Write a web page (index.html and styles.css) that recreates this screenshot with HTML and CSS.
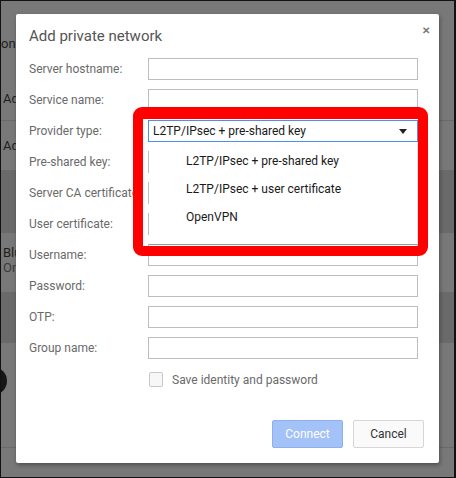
FILE: index.html
```html
<!DOCTYPE html>
<html lang="en">
<head>
    <meta charset="UTF-8">
    <meta name="viewport" content="width=device-width, initial-scale=1.0">
    <title>Add private network</title>
    <link rel="stylesheet" href="styles.css">
</head>
<body>
<div class="screen">

    <!-- settings page behind the dimmed overlay, only the edges show -->
    <div class="backdrop">
        <div class="bg-row bg-top">
            <span class="bg-text bg-cut">onn</span>
            <span class="bg-text">Ad</span>
        </div>
        <div class="bg-row bg-add"><span class="bg-text">Ad</span></div>
        <div class="bg-row bg-dark"></div>
        <div class="bg-row bg-bt">
            <span class="bg-text">Blu</span>
            <span class="bg-text bg-sub">On</span>
        </div>
        <div class="bg-row bg-dark bg-dark2"></div>
        <div class="bg-row bg-device"><span class="bg-avatar"></span></div>
        <div class="bg-row bg-last"></div>
    </div>

    <div class="dialog">
        <div class="dialog-head">
            <h1>Add private network</h1>
            <span class="close">&#x2715;</span>
        </div>

        <div class="form">
            <label>Server hostname:</label>
            <div class="field"></div>

            <label>Service name:</label>
            <div class="field"></div>

            <label>Provider type:</label>
            <div class="select-wrap">
                <div class="select">
                    <span>L2TP/IPsec + pre-shared key</span>
                    <span class="arrow"></span>
                </div>
                <ul class="menu">
                    <li>L2TP/IPsec + pre-shared key</li>
                    <li>L2TP/IPsec + user certificate</li>
                    <li>OpenVPN</li>
                </ul>
            </div>

            <label>Pre-shared key:</label>
            <div class="field"></div>

            <label>Server CA certificate:</label>
            <div class="field"></div>

            <label>User certificate:</label>
            <div class="field"></div>

            <label>Username:</label>
            <div class="field"></div>

            <label>Password:</label>
            <div class="field"></div>

            <label>OTP:</label>
            <div class="field"></div>

            <label>Group name:</label>
            <div class="field"></div>
        </div>

        <div class="save-row">
            <span class="checkbox"></span>
            <span>Save identity and password</span>
        </div>

        <div class="buttons">
            <button class="btn btn-primary">Connect</button>
            <button class="btn">Cancel</button>
        </div>
    </div>

    <!-- red highlight drawn over the screenshot -->
    <div class="highlight"></div>
</div>
</body>
</html>
```

FILE: styles.css
```css
/* page */
body, html {
    margin: 0;
    background: #000;
}
.screen {
    position: relative;
    width: 456px;
    height: 478px;
    box-sizing: border-box;
    border: 1px solid #111;
    border-right-width: 2px;
    overflow: hidden;
    font-family: Roboto, "Liberation Sans", sans-serif;
    background: #787878;
}

/* background page */
.backdrop {
    display: flex;
    flex-direction: column;
}
.bg-row {
    position: relative;
    border-bottom: 1px solid #6a6a6a;
    box-sizing: border-box;
}
.bg-text {
    display: block;
    font-size: 13px;
    line-height: 15px;
    color: #1e1e1e;
    padding-left: 2px;
}
.bg-top {
    height: 120px;
    padding-top: 35px;
}
.bg-top .bg-cut {
    padding-left: 0;
    margin-bottom: 40px;
}
.bg-add {
    height: 50px;
    padding-top: 17px;
}
.bg-dark {
    height: 62px;
    background: #6a6a6a;
}
.bg-bt {
    height: 60px;
    padding-top: 12px;
}
.bg-sub {
    color: #3a3a3a;
}
.bg-dark2 {
    height: 50px;
}
.bg-device {
    height: 105px;
}
.bg-avatar {
    position: absolute;
    left: -22px;
    top: 24px;
    width: 28px;
    height: 28px;
    border-radius: 50%;
    background: #161616;
}
.bg-last {
    height: 40px;
    border-bottom: none;
}

/* dialog */
.dialog {
    position: absolute;
    left: 15px;
    top: 13px;
    width: 423px;
    height: 449px;
    box-sizing: border-box;
    padding: 0 21px 15px 13px;
    background: #fff;
    border-radius: 2px;
    box-shadow: 1px 2px 4px rgba(0, 0, 0, 0.35);
    display: flex;
    flex-direction: column;
}
.dialog-head {
    display: flex;
    justify-content: space-between;
    align-items: flex-start;
    padding-top: 12px;
}
.dialog-head h1 {
    margin: 0;
    font-size: 15px;
    line-height: 20px;
    font-weight: normal;
    color: #555;
}
.close {
    font-size: 10px;
    font-weight: bold;
    color: #777;
    margin-right: -12px;
    margin-top: -1px;
}

/* form rows */
.form {
    display: grid;
    grid-template-columns: 119px 270px;
    grid-auto-rows: 22px;
    row-gap: 9px;
    margin-top: 12px;
}
.form label {
    font-size: 12px;
    line-height: 22px;
    color: #6a6a6a;
    white-space: nowrap;
}
.field {
    position: relative;
    z-index: 1;
    border: 1px solid #bdbdbd;
    background: #fff;
}
.select-wrap {
    position: relative;
    z-index: 3;
}
.select {
    height: 22px;
    box-sizing: border-box;
    border: 1px solid #4c8ef5;
    padding: 0 10px 0 4px;
    display: flex;
    align-items: center;
    justify-content: space-between;
    font-size: 12px;
    color: #1a1a1a;
    background: #fff;
}
.arrow {
    width: 0;
    height: 0;
    border-left: 4px solid transparent;
    border-right: 4px solid transparent;
    border-top: 5px solid #222;
}
.menu {
    position: absolute;
    left: 1px;
    right: 0;
    top: 22px;
    margin: 0;
    padding: 5px 0 13px;
    list-style: none;
    background: #fff;
    border-bottom: 1px solid #9a9a9a;
    border-right: 1px solid #e0e0e0;
}
.menu li {
    height: 28px;
    line-height: 28px;
    padding-left: 37px;
    font-size: 12px;
    color: #1a1a1a;
}

/* checkbox row */
.save-row {
    display: flex;
    align-items: center;
    gap: 9px;
    margin: 13px 0 0 120px;
    font-size: 12px;
    color: #6a6a6a;
}
.checkbox {
    width: 12px;
    height: 13px;
    border: 1px solid #c8c8c8;
    border-radius: 2px;
    background: #f7f7f7;
}

/* buttons */
.buttons {
    margin-top: auto;
    margin-right: -6px;
    display: flex;
    justify-content: flex-end;
    gap: 10px;
}
.btn {
    width: 71px;
    height: 28px;
    font-family: Roboto, "Liberation Sans", sans-serif;
    font-size: 12px;
    color: #333;
    background: #fafafa;
    border: 1px solid #d6d6d6;
    border-radius: 2px;
    padding: 0;
}
.btn-primary {
    color: #fff;
    background: #a3c2f8;
    border-color: #8fb0ec;
}

/* red annotation */
.highlight {
    position: absolute;
    left: 132px;
    top: 106px;
    width: 295px;
    height: 149px;
    box-sizing: border-box;
    border: 10px solid #ff0000;
    border-top-width: 12px;
    border-radius: 9px;
    z-index: 5;
}
```
